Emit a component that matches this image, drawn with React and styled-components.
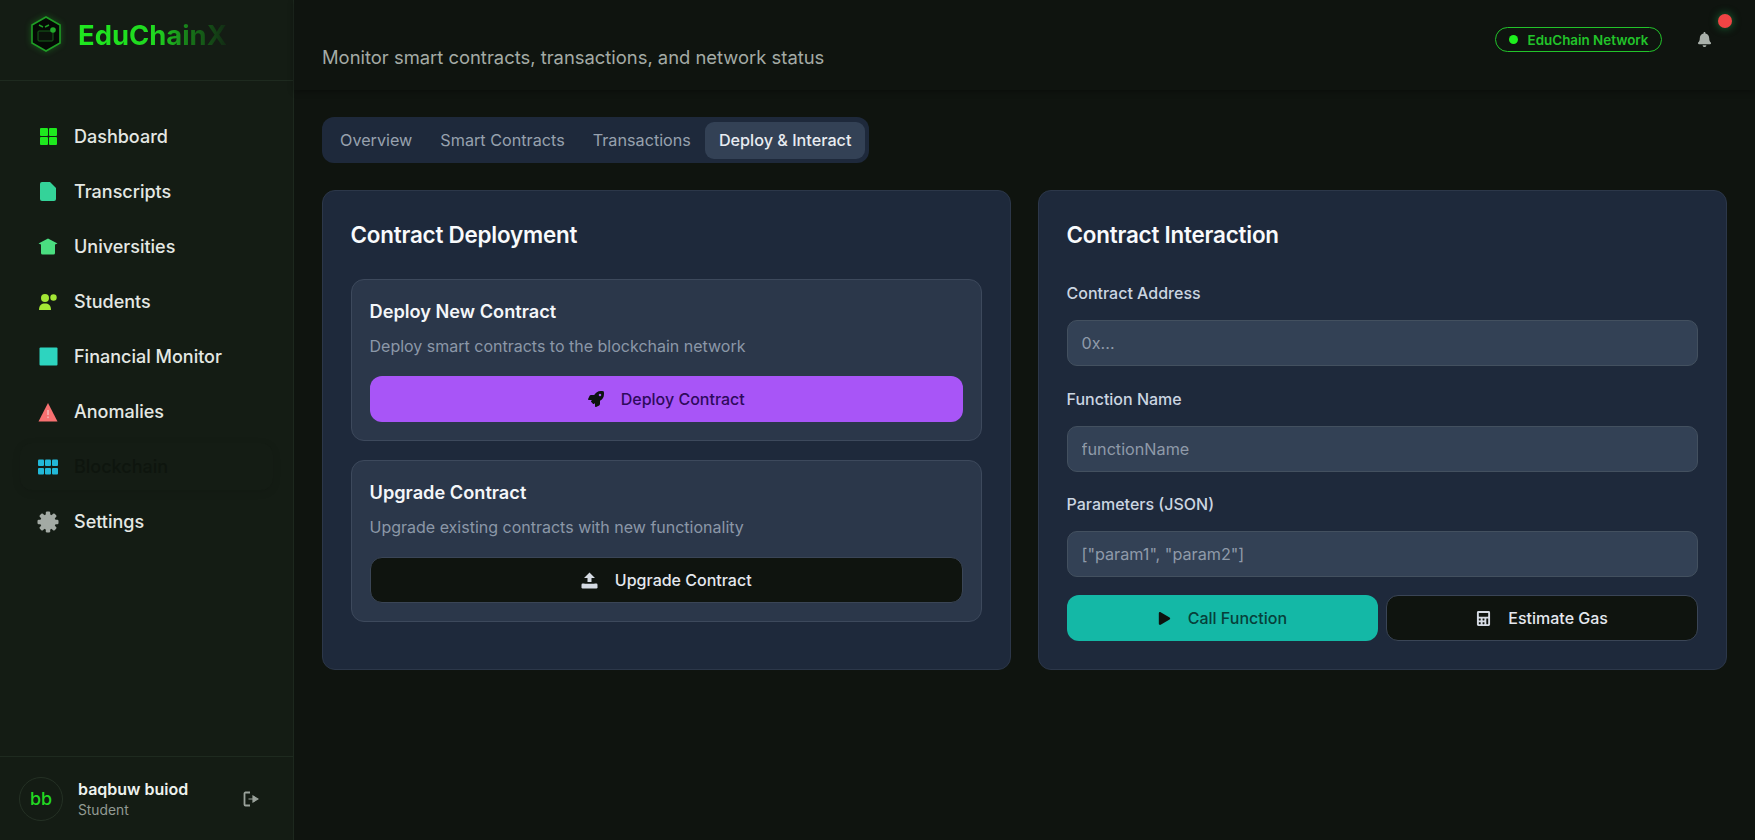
import React from "react";
import styled, { createGlobalStyle } from "styled-components";
import { FaRocket, FaPlay, FaCalculator, FaBell } from "react-icons/fa";

const GlobalStyle = createGlobalStyle`
  html, body {
    margin: 0;
    padding: 0;
    height: 100%;
    background: #0f140f;
  }
  * {
    box-sizing: border-box;
  }
  body {
    font-family: Inter, "Noto Sans", sans-serif;
    overflow: hidden;
  }
`;

const Layout = styled.div`
  display: flex;
  width: 100%;
  height: 840px;
`;

const Sidebar = styled.aside`
  width: 294px;
  flex-shrink: 0;
  display: flex;
  flex-direction: column;
  background: #141c14;
  border-right: 1px solid #1d281e;
`;

const Brand = styled.div`
  height: 81px;
  flex-shrink: 0;
  display: flex;
  align-items: flex-start;
  gap: 14px;
  padding: 15px 0 0 28px;
  border-bottom: 1px solid #1e2a1f;
`;

const BrandName = styled.span`
  font-size: 27.4px;
  font-weight: 700;
  line-height: 38px;
  margin-top: 1px;
  background: linear-gradient(90deg, #1fe81f 0%, #20d820 52%, #166a18 78%, #122a14 100%);
  -webkit-background-clip: text;
  background-clip: text;
  color: transparent;
`;

const Nav = styled.nav`
  flex: 1;
  display: flex;
  flex-direction: column;
  gap: 8px;
  padding: 32px 20px 0;
`;

const NavItem = styled.a`
  height: 47px;
  display: flex;
  align-items: center;
  gap: 15px;
  padding-left: 17px;
  border-radius: 12px;
  font-size: 18px;
  font-weight: 500;
  color: ${(p) => (p.$active ? "#0e150e" : "#e4e8e4")};
  background: ${(p) => (p.$active ? "#141c14" : "transparent")};
  box-shadow: ${(p) => (p.$active ? "0 2px 8px rgba(0, 0, 0, 0.1)" : "none")};
`;

const NavIcon = styled.span`
  width: 22px;
  height: 22px;
  display: flex;
  align-items: center;
  justify-content: center;
  color: ${(p) => p.$color};
`;

const UserBar = styled.div`
  height: 84px;
  flex-shrink: 0;
  display: flex;
  align-items: center;
  padding: 0 34px 0 19px;
  border-top: 1px solid #1e2a1f;
`;

const Avatar = styled.div`
  width: 44px;
  height: 44px;
  border-radius: 50%;
  border: 1px solid #243024;
  display: flex;
  align-items: center;
  justify-content: center;
  font-size: 17.9px;
  font-weight: 500;
  color: #22d822;
`;

const UserInfo = styled.div`
  flex: 1;
  margin-left: 15px;
`;

const UserName = styled.div`
  font-size: 16px;
  font-weight: 600;
  line-height: 21px;
  margin-top: 1px;
  color: #eef2ee;
`;

const UserRole = styled.div`
  font-size: 13.8px;
  line-height: 20px;
  color: #929a93;
`;

const Main = styled.main`
  flex: 1;
  min-width: 0;
  display: flex;
  flex-direction: column;
`;

const Header = styled.header`
  height: 90px;
  flex-shrink: 0;
  display: flex;
  align-items: flex-start;
  justify-content: space-between;
  padding: 0 28px;
  background: #0f140f;
  box-shadow: 0 2px 6px rgba(0, 0, 0, 0.3);
`;

const Subtitle = styled.p`
  margin: 45px 0 0;
  font-size: 18.4px;
  line-height: 25px;
  color: #a4aba5;
`;

const HeaderRight = styled.div`
  display: flex;
  align-items: center;
  gap: 35px;
  padding: 27px 15px 0 0;
`;

const NetworkBadge = styled.div`
  height: 25px;
  display: flex;
  align-items: center;
  gap: 10px;
  padding: 0 12.5px;
  border: 1px solid #22c32a;
  border-radius: 13px;
  font-size: 13.4px;
  font-weight: 600;
  color: #22c32a;
`;

const StatusDot = styled.span`
  width: 9px;
  height: 9px;
  border-radius: 50%;
  background: #1ef01e;
`;

const BellWrap = styled.div`
  position: relative;
  display: flex;
  color: #a9b0aa;
`;

const BellDot = styled.span`
  position: absolute;
  top: -18px;
  right: -20px;
  width: 14px;
  height: 14px;
  border-radius: 50%;
  background: #ef4444;
  box-shadow: 0 0 8px rgba(34, 197, 94, 0.55);
`;

const Content = styled.div`
  padding: 27px 28px 0;
`;

const Tabs = styled.div`
  display: inline-flex;
  align-items: center;
  height: 46px;
  padding: 4px;
  border-radius: 12px;
  background: #1e293b;
`;

const Tab = styled.div`
  height: 37px;
  display: flex;
  align-items: center;
  padding: 0 14px;
  border-radius: 9px;
  font-size: 16.2px;
  font-weight: ${(p) => (p.$active ? 500 : 400)};
  color: ${(p) => (p.$active ? "#e8ecf1" : "#97a1ae")};
  background: ${(p) => (p.$active ? "#334155" : "transparent")};
`;

const Columns = styled.div`
  display: grid;
  grid-template-columns: 1fr 1fr;
  gap: 27px;
  margin-top: 27px;
`;

const Card = styled.section`
  height: 480px;
  padding: 27px 28px 27px 27.5px;
  border: 1px solid #2c3749;
  border-radius: 13px;
  background: #1e293b;
`;

const CardTitle = styled.h2`
  margin: 0 0 27px;
  font-size: 22.4px;
  font-weight: 600;
  line-height: 34px;
  letter-spacing: -0.2px;
  color: #f8fafc;
`;

const Panel = styled.div`
  height: 162px;
  margin-bottom: 19px;
  padding: 18px 18px 0;
  border: 1px solid #3d495c;
  border-radius: 13px;
  background: #2b374a;
`;

const PanelTitle = styled.h3`
  margin: 0;
  font-size: 18.2px;
  font-weight: 600;
  line-height: 26px;
  color: #f4f6f9;
`;

const PanelText = styled.p`
  margin: 10px 0 18px;
  font-size: 16px;
  line-height: 24px;
  color: #8b97a8;
`;

const Button = styled.button`
  width: 100%;
  height: 46px;
  display: flex;
  align-items: center;
  justify-content: center;
  gap: 17px;
  border-radius: 12px;
  border: ${(p) => (p.$variant === "dark" ? "1px solid #3a4556" : "none")};
  font-family: inherit;
  font-size: 16px;
  font-weight: 500;
  background: ${(p) =>
    p.$variant === "purple" ? "#a855f7" : p.$variant === "teal" ? "#14b8a6" : "#0f140f"};
  color: ${(p) =>
    p.$variant === "purple" ? "#2e0a5c" : p.$variant === "teal" ? "#073f3a" : "#e4e8ee"};
  & svg {
    color: ${(p) => (p.$variant === "dark" ? "#d5dbe3" : "#0d130f")};
  }
`;

const Field = styled.div`
  & + & {
    margin-top: 18.5px;
  }
`;

const Label = styled.label`
  display: block;
  margin-bottom: 15px;
  padding-top: 2px;
  font-size: 16px;
  font-weight: 500;
  line-height: 24px;
  color: #cbd5e1;
`;

const Input = styled.input`
  display: block;
  width: 100%;
  height: 46px;
  padding: 0 14px;
  border: 1px solid #43505f;
  border-radius: 10px;
  outline: none;
  font-family: inherit;
  font-size: 16.2px;
  background: #334155;
  color: #e4e8ee;
  &::placeholder {
    color: #8f9aa9;
    opacity: 1;
  }
`;

const ButtonRow = styled.div`
  display: grid;
  grid-template-columns: 1fr 1fr;
  gap: 8px;
  margin-top: 18px;
`;

const LogoMark = () => (
  <svg width="36" height="38" viewBox="0 0 36 38" style={{ filter: "drop-shadow(0 0 3px rgba(34, 197, 40, 0.35))" }}>
    <path d="M18 2 L32 10 V28 L18 36 L4 28 V10 Z" fill="#050805" stroke="#1f9d25" strokeWidth="1.6" />
    <rect x="10" y="16" width="15" height="10" rx="1" fill="#0a120a" stroke="#155e18" strokeWidth="1" />
    <circle cx="25" cy="15" r="2.8" fill="#22a82a" />
    <path d="M11 10 L15 12 M17 12 L21 10" stroke="#1f9d25" strokeWidth="1.4" />
  </svg>
);

const GridIcon = () => (
  <svg width="19" height="19" viewBox="0 0 19 19" fill="currentColor">
    <rect x="1" y="1" width="8" height="8" rx="1" />
    <rect x="10" y="1" width="8" height="8" rx="1" />
    <rect x="1" y="10" width="8" height="8" rx="1" />
    <rect x="10" y="10" width="8" height="8" rx="1" />
  </svg>
);

const FileIcon = () => (
  <svg width="18" height="21" viewBox="0 0 18 21" fill="currentColor">
    <path d="M3 1 H11 L17 7 V18 A2 2 0 0 1 15 20 H3 A2 2 0 0 1 1 18 V3 A2 2 0 0 1 3 1 Z" />
  </svg>
);

const SchoolIcon = () => (
  <svg width="20" height="17" viewBox="0 0 20 17" fill="currentColor">
    <path d="M10 0.5 L19.5 5.5 L17 6.5 V15 A1.5 1.5 0 0 1 15.5 16.5 H4.5 A1.5 1.5 0 0 1 3 15 V6.5 L0.5 5.5 Z" />
  </svg>
);

const UsersIcon = () => (
  <svg width="20" height="18" viewBox="0 0 20 18" fill="currentColor">
    <circle cx="7" cy="5" r="4" />
    <circle cx="15.5" cy="4.5" r="3.2" />
    <path d="M1 17 C1 12 3.5 10.5 7 10.5 C10.5 10.5 13 12 13 17 Z" />
  </svg>
);

const SquareIcon = () => (
  <svg width="19" height="19" viewBox="0 0 19 19" fill="currentColor">
    <rect x="0.5" y="0.5" width="18" height="18" rx="1" />
  </svg>
);

const WarnIcon = () => (
  <svg width="20" height="20" viewBox="0 0 20 20">
    <path d="M10 1 L19.5 19.5 H0.5 Z" fill="currentColor" />
    <rect x="9.2" y="8" width="1.6" height="5" fill="#f6b3b3" />
    <rect x="9.2" y="14.5" width="1.6" height="1.6" fill="#f6b3b3" />
  </svg>
);

const BlocksIcon = () => (
  <svg width="20" height="16" viewBox="0 0 20 16" fill="currentColor">
    <rect x="0" y="0.5" width="6" height="6.5" rx="1" />
    <rect x="7" y="0.5" width="6" height="6.5" rx="1" />
    <rect x="14" y="0.5" width="6" height="6.5" rx="1" />
    <rect x="0" y="9" width="6" height="6.5" rx="1" />
    <rect x="7" y="9" width="6" height="6.5" rx="1" />
    <rect x="14" y="9" width="6" height="6.5" rx="1" />
  </svg>
);

const GearIcon = () => (
  <svg width="22" height="22" viewBox="0 0 22 22" fill="currentColor">
    <circle cx="11" cy="11" r="7.8" />
    {[0, 45, 90, 135, 180, 225, 270, 315].map((deg) => (
      <rect key={deg} x="8.8" y="0.5" width="4.4" height="5" rx="1.2" transform={`rotate(${deg} 11 11)`} />
    ))}
  </svg>
);

const LogoutIcon = () => (
  <svg width="16" height="16" viewBox="0 0 16 16" fill="none" stroke="#9aa29b">
    <path d="M7 1.5 H2.5 A1 1 0 0 0 1.5 2.5 V13.5 A1 1 0 0 0 2.5 14.5 H7" strokeWidth="1.8" />
    <path d="M5.5 8 H10 V5 L15 8 L10 11 V8" fill="#9aa29b" strokeWidth="1.2" />
  </svg>
);

const UploadIcon = () => (
  <svg width="17" height="17" viewBox="0 0 17 17" fill="currentColor">
    <path d="M8.5 0.5 L14 6 H10.5 V11 H6.5 V6 H3 Z" />
    <rect x="0.5" y="11.5" width="16" height="5" rx="1.2" />
    <rect x="3.5" y="10" width="10" height="1.5" fill="#0f140f" />
  </svg>
);

const navItems = [
  { label: "Dashboard", color: "#1ee81e", icon: <GridIcon /> },
  { label: "Transcripts", color: "#34d399", icon: <FileIcon /> },
  { label: "Universities", color: "#4ade80", icon: <SchoolIcon /> },
  { label: "Students", color: "#a3e635", icon: <UsersIcon /> },
  { label: "Financial Monitor", color: "#2dd4bf", icon: <SquareIcon /> },
  { label: "Anomalies", color: "#f87171", icon: <WarnIcon /> },
  { label: "Blockchain", color: "#22b8d8", icon: <BlocksIcon />, active: true },
  { label: "Settings", color: "#a3aaa4", icon: <GearIcon /> },
];

const tabs = ["Overview", "Smart Contracts", "Transactions", "Deploy & Interact"];

const App = () => {
  return (
    <>
      <GlobalStyle />
      <Layout>
        <Sidebar>
          <Brand>
            <LogoMark />
            <BrandName>EduChainX</BrandName>
          </Brand>
          <Nav>
            {navItems.map((item) => (
              <NavItem key={item.label} $active={item.active}>
                <NavIcon $color={item.color}>{item.icon}</NavIcon>
                {item.label}
              </NavItem>
            ))}
          </Nav>
          <UserBar>
            <Avatar>bb</Avatar>
            <UserInfo>
              <UserName>baqbuw buiod</UserName>
              <UserRole>Student</UserRole>
            </UserInfo>
            <LogoutIcon />
          </UserBar>
        </Sidebar>
        <Main>
          <Header>
            <Subtitle>Monitor smart contracts, transactions, and network status</Subtitle>
            <HeaderRight>
              <NetworkBadge>
                <StatusDot />
                EduChain Network
              </NetworkBadge>
              <BellWrap>
                <FaBell size={15} />
                <BellDot />
              </BellWrap>
            </HeaderRight>
          </Header>
          <Content>
            <Tabs>
              {tabs.map((tab) => (
                <Tab key={tab} $active={tab === "Deploy & Interact"}>
                  {tab}
                </Tab>
              ))}
            </Tabs>
            <Columns>
              <Card>
                <CardTitle>Contract Deployment</CardTitle>
                <Panel>
                  <PanelTitle>Deploy New Contract</PanelTitle>
                  <PanelText>Deploy smart contracts to the blockchain network</PanelText>
                  <Button $variant="purple">
                    <FaRocket size={16} />
                    Deploy Contract
                  </Button>
                </Panel>
                <Panel>
                  <PanelTitle>Upgrade Contract</PanelTitle>
                  <PanelText>Upgrade existing contracts with new functionality</PanelText>
                  <Button $variant="dark">
                    <UploadIcon />
                    Upgrade Contract
                  </Button>
                </Panel>
              </Card>
              <Card>
                <CardTitle>Contract Interaction</CardTitle>
                <Field>
                  <Label>Contract Address</Label>
                  <Input placeholder="0x..." />
                </Field>
                <Field>
                  <Label>Function Name</Label>
                  <Input placeholder="functionName" />
                </Field>
                <Field>
                  <Label>Parameters (JSON)</Label>
                  <Input placeholder={'["param1", "param2"]'} />
                </Field>
                <ButtonRow>
                  <Button $variant="teal">
                    <FaPlay size={13} />
                    Call Function
                  </Button>
                  <Button $variant="dark">
                    <FaCalculator size={15} />
                    Estimate Gas
                  </Button>
                </ButtonRow>
              </Card>
            </Columns>
          </Content>
        </Main>
      </Layout>
    </>
  );
};

export default App;
